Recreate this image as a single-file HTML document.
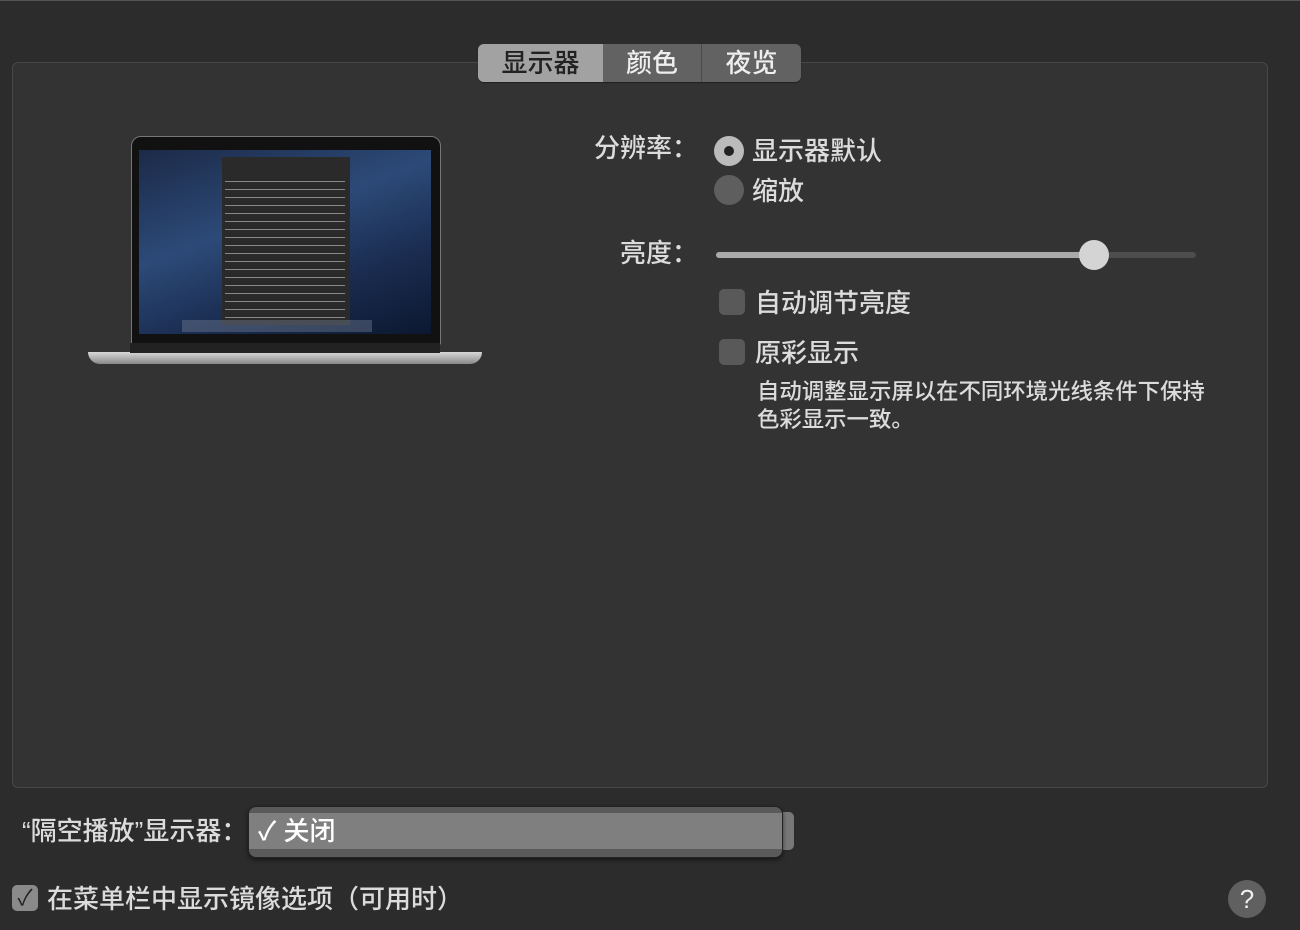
<!DOCTYPE html><html><head><meta charset="utf-8"><style>
body{margin:0;width:1300px;height:930px;background:#2c2c2c;font-family:"Liberation Sans","Noto Sans CJK SC",sans-serif;color:#dcdcdc;position:relative;overflow:hidden}
.a{position:absolute}
.panel{left:12px;top:62px;width:1254px;height:724px;background:#333;border:1px solid #474747;border-radius:6px}
.tabs{left:478px;top:44px;height:38px;width:323px;display:flex;border-radius:6px;overflow:hidden;background:#626262;box-shadow:0 1px 1px rgba(0,0,0,.4)}
.tabs div{font-size:26px;line-height:38px;text-align:center;color:#eee;font-weight:500}
.t{font-size:26px;line-height:30px;white-space:nowrap;font-weight:500}
.radio{width:30px;height:30px;border-radius:50%;background:#5e5e5e}
.cb{width:26px;height:26px;border-radius:5px;background:#595959}
</style></head><body>
<div class="a" style="left:0;top:0;width:1300px;height:1px;background:#555"></div>
<div class="a panel"></div>
<div class="a tabs"><div style="width:125px;background:#a2a2a2;color:#222">显示器</div><div style="width:98px;border-right:1px solid #4a4a4a">颜色</div><div style="width:99px">夜览</div></div>

<!-- laptop -->
<div class="a" style="left:131px;top:136px;width:308px;height:207px;background:#111;border-radius:10px 10px 2px 2px;border:1px solid #777"></div>
<div class="a" style="left:139px;top:150px;width:292px;height:184px;background:linear-gradient(160deg,#1c2a48,#2c4a78 40%,#1a2c50 70%,#0c1830)"></div>
<div class="a" style="left:222px;top:157px;width:128px;height:168px;background:#2a2a2a"></div>
<div class="a" style="left:225px;top:178px;width:120px;height:140px;background:repeating-linear-gradient(#2a2a2a 0,#2a2a2a 3px,#888 3px,#888 4px,#2a2a2a 4px,#2a2a2a 8px)"></div>
<div class="a" style="left:182px;top:320px;width:190px;height:12px;background:rgba(120,130,150,.4)"></div>
<div class="a" style="left:88px;top:352px;width:394px;height:12px;background:linear-gradient(#d8d8d8,#888);border-radius:0 0 20px 20px"></div>
<div class="a" style="left:130px;top:343px;width:310px;height:10px;background:#222"></div>

<div class="a t" style="left:594px;top:133px">分辨率：</div>
<div class="a radio" style="left:714px;top:136px;background:#bbb"><div class="a" style="left:10px;top:10px;width:10px;height:10px;border-radius:50%;background:#222"></div></div>
<div class="a t" style="left:752px;top:136px">显示器默认</div>
<div class="a radio" style="left:714px;top:175px"></div>
<div class="a t" style="left:752px;top:176px">缩放</div>
<div class="a t" style="left:620px;top:238px">亮度：</div>
<div class="a" style="left:716px;top:252px;width:480px;height:6px;border-radius:3px;background:#4d4d4d"></div>
<div class="a" style="left:716px;top:252px;width:380px;height:6px;border-radius:3px;background:#aaa"></div>
<div class="a" style="left:1079px;top:240px;width:30px;height:30px;border-radius:50%;background:#d4d4d4"></div>
<div class="a cb" style="left:719px;top:289px"></div>
<div class="a t" style="left:755px;top:288px">自动调节亮度</div>
<div class="a cb" style="left:719px;top:339px"></div>
<div class="a t" style="left:755px;top:338px">原彩显示</div>
<div class="a" style="left:757px;top:378px;font-size:22.4px;line-height:28px;font-weight:500;white-space:nowrap">自动调整显示屏以在不同环境光线条件下保持<br>色彩显示一致。</div>

<div class="a t" style="left:22px;top:816px">“隔空播放”显示器：</div>
<div class="a" style="left:778px;top:812px;width:16px;height:38px;background:#777;border-radius:0 5px 5px 0"></div>
<div class="a" style="left:248px;top:806px;width:533px;height:50px;background:#5a5a5a;border:1px solid #222;border-radius:8px;box-shadow:0 2px 4px rgba(0,0,0,.5)"></div>
<div class="a" style="left:249px;top:813px;width:533px;height:36px;background:#7f7f7f"></div>
<div class="a t" style="left:258px;top:816px;color:#fff">✓ 关闭</div>
<div class="a cb" style="left:12px;top:885px;background:#8a8a8a;color:#222;font-size:22px;line-height:26px;text-align:center">✓</div>
<div class="a t" style="left:47px;top:884px">在菜单栏中显示镜像选项（可用时）</div>
<div class="a" style="left:1228px;top:880px;width:38px;height:38px;border-radius:50%;background:#606060;color:#eee;font-size:26px;line-height:38px;text-align:center">?</div>
</body></html>
